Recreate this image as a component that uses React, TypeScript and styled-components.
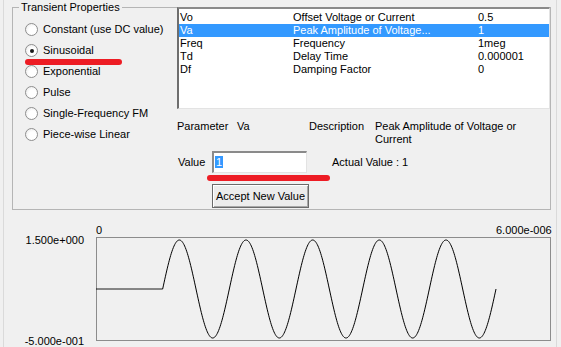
import React from 'react';
import styled, { createGlobalStyle } from 'styled-components';

const GlobalStyle = createGlobalStyle`
  html, body {
    margin: 0;
    padding: 0;
    background: #f0f0f0;
  }
  body {
    font-family: "Liberation Sans", Arial, sans-serif;
    font-size: 11px;
    color: #000;
  }
`;

const Page = styled.div`
  position: relative;
  width: 561px;
  height: 347px;
  overflow: hidden;
  background: #f0f0f0;
`;

const Frame = styled.div`
  height: 347px;
  margin: 0 4px 0 3px;
  padding-top: 1px;
  box-sizing: border-box;
  border-left: 1px solid #dadada;
  border-right: 1px solid #dadada;
  line-height: 13px;
`;

const GroupBox = styled.fieldset`
  margin: 0 5px 0 8px;
  padding: 0;
  height: 209px;
  box-sizing: border-box;
  border: 1px solid #b5b5b5;
  min-width: 0;
`;

const Legend = styled.legend`
  margin-left: 6px;
  padding: 0 2px;
  line-height: 13px;
`;

const GroupBody = styled.div`
  display: flex;
  margin-top: -7px;
`;

const RadioList = styled.div`
  width: 164px;
  padding: 12px 0 0 12px;
  box-sizing: border-box;
`;

const RadioRow = styled.label`
  display: flex;
  align-items: center;
  height: 21px;
  gap: 5px;
  white-space: nowrap;
`;

const RadioCircle = styled.span<{ $checked?: boolean }>`
  width: 13px;
  height: 13px;
  box-sizing: border-box;
  border-radius: 50%;
  border: 1px solid #8e8e8e;
  background: radial-gradient(circle at 60% 60%, #ffffff 40%, #e4e4e4 100%);
  display: flex;
  align-items: center;
  justify-content: center;
  flex-shrink: 0;
  &::after {
    content: '';
    display: ${(p) => (p.$checked ? 'block' : 'none')};
    width: 4px;
    height: 4px;
    border-radius: 50%;
    background: #1a1a1a;
  }
`;

const RightColumn = styled.div`
  flex: 1;
  min-width: 0;
`;

const ListBox = styled.div`
  height: 102px;
  box-sizing: border-box;
  background: #fff;
  border-top: 2px solid #8a8a8a;
  border-left: 2px solid #6e6e6e;
  border-right: 1px solid #e3e3e3;
  border-bottom: 1px solid #e3e3e3;
  padding-top: 2px;
`;

const ListRow = styled.div<{ $selected?: boolean }>`
  display: grid;
  grid-template-columns: 113px 185px 1fr;
  height: 13px;
  padding-left: 1px;
  white-space: nowrap;
  background: ${(p) => (p.$selected ? '#3399ff' : 'transparent')};
  color: ${(p) => (p.$selected ? '#fff' : '#000')};
`;

const ParamRow = styled.div`
  display: flex;
  margin-top: 11px;
`;

const FieldLabel = styled.span<{ $w: number }>`
  width: ${(p) => p.$w}px;
  flex-shrink: 0;
`;

const DescText = styled.span`
  flex: 1;
`;

const ValueRow = styled.div`
  display: flex;
  align-items: center;
  margin-top: 5px;
  padding-left: 1px;
`;

const TextBox = styled.div`
  width: 95px;
  height: 22px;
  box-sizing: border-box;
  background: #fff;
  border-top: 2px solid #8a8a8a;
  border-left: 2px solid #8a8a8a;
  border-right: 1px solid #e3e3e3;
  border-bottom: 1px solid #e3e3e3;
  padding: 3px 0 0 1px;
`;

const Selected = styled.span`
  background: #3399ff;
  color: #fff;
  padding: 0 1px;
`;

const ActualValue = styled.span`
  margin-left: 25px;
`;

const AcceptButton = styled.button`
  display: block;
  margin: 11px 0 0 35px;
  width: 97px;
  height: 24px;
  padding: 0;
  font: inherit;
  color: #000;
  background: #ececec;
  border: 1px solid #6a6a6a;
  box-shadow: inset 1px 1px #fff, inset -1px -1px #a8a8a8;
  white-space: nowrap;
`;

const Marker = styled.div<{ $x: number; $y: number; $w: number }>`
  position: absolute;
  left: ${(p) => p.$x}px;
  top: ${(p) => p.$y}px;
  width: ${(p) => p.$w}px;
  height: 6px;
  border-radius: 3px;
  background: #ed1c24;
`;

const Chart = styled.div`
  display: grid;
  grid-template-columns: 92px 455px;
  grid-template-rows: 13px 104px;
  margin-top: 14px;
`;

const XAxis = styled.div`
  grid-column: 2;
  position: relative;
  width: 460px;
  overflow: hidden;
`;

const XLabel = styled.span`
  position: absolute;
  top: 0;
  white-space: nowrap;
`;

const YAxis = styled.div`
  grid-column: 1;
  grid-row: 2;
  display: flex;
  flex-direction: column;
  justify-content: space-between;
  align-items: flex-end;
  padding-right: 12px;
  margin: -3px 0 -7px 0;
  white-space: nowrap;
`;

const Plot = styled.svg`
  grid-column: 2;
  grid-row: 2;
  display: block;
`;

const params = [
  { name: 'Vo', desc: 'Offset Voltage or Current', value: '0.5' },
  { name: 'Va', desc: 'Peak Amplitude of Voltage...', value: '1', selected: true },
  { name: 'Freq', desc: 'Frequency', value: '1meg' },
  { name: 'Td', desc: 'Delay Time', value: '0.000001' },
  { name: 'Df', desc: 'Damping Factor', value: '0' },
];

const sources = [
  'Constant (use DC value)',
  'Sinusoidal',
  'Exponential',
  'Pulse',
  'Single-Frequency FM',
  'Piece-wise Linear',
];

// sine: Vo + Va*sin(2*pi*f*(t-Td)), t from 0 to 6us
const wavePath = () => {
  const tEnd = 6;
  const pxPerUs = 400 / tEnd;
  const toY = (v: number) => 3 + (1.5 - v) * 49;
  const pts: string[] = [];
  for (let i = 0; i <= 600; i++) {
    const t = (i / 600) * tEnd;
    const v = t < 1 ? 0.5 : 0.5 + Math.sin(2 * Math.PI * (t - 1));
    pts.push(`${(t * pxPerUs).toFixed(2)},${toY(v).toFixed(2)}`);
  }
  return 'M' + pts.join(' L');
};

const App = () => (
  <Page>
    <GlobalStyle />
    <Frame>
      <GroupBox>
        <Legend>Transient Properties</Legend>
        <GroupBody>
          <RadioList>
            {sources.map((s) => (
              <RadioRow key={s}>
                <RadioCircle $checked={s === 'Sinusoidal'} />
                {s}
              </RadioRow>
            ))}
          </RadioList>
          <RightColumn>
            <ListBox>
              {params.map((p) => (
                <ListRow key={p.name} $selected={p.selected}>
                  <span>{p.name}</span>
                  <span>{p.desc}</span>
                  <span>{p.value}</span>
                </ListRow>
              ))}
            </ListBox>
            <ParamRow>
              <FieldLabel $w={60}>Parameter</FieldLabel>
              <FieldLabel $w={72}>Va</FieldLabel>
              <FieldLabel $w={66}>Description</FieldLabel>
              <DescText>Peak Amplitude of Voltage or Current</DescText>
            </ParamRow>
            <ValueRow>
              <FieldLabel $w={34}>Value</FieldLabel>
              <TextBox>
                <Selected>1</Selected>
              </TextBox>
              <ActualValue>Actual Value : 1</ActualValue>
            </ValueRow>
            <AcceptButton>Accept New Value</AcceptButton>
          </RightColumn>
        </GroupBody>
      </GroupBox>
      <Chart>
        <XAxis>
          <XLabel style={{ left: 0 }}>0</XLabel>
          <XLabel style={{ left: 400 }}>6.000e-006</XLabel>
        </XAxis>
        <YAxis>
          <span>1.500e+000</span>
          <span>-5.000e-001</span>
        </YAxis>
        <Plot width={455} height={104} viewBox="0 0 455 104">
          <rect x={0.5} y={0.5} width={454} height={103} fill="none" stroke="#8c8c8c" />
          <path d={wavePath()} fill="none" stroke="#000" strokeWidth={1} />
        </Plot>
      </Chart>
    </Frame>
    <Marker $x={25} $y={59} $w={97} />
    <Marker $x={207} $y={175} $w={123} />
  </Page>
);

export default App;
